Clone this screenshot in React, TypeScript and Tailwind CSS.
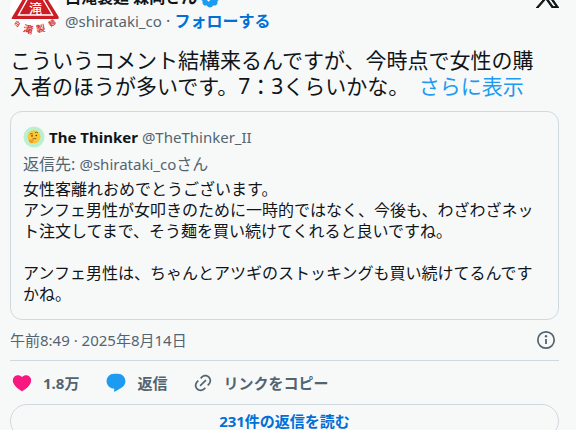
import type { ReactNode } from 'react'

const paths = {
  x: 'M14.258 10.152L23.176 0h-2.113l-7.747 8.813L7.133 0H0l9.352 13.328L0 23.973h2.113l8.176-9.309 6.531 9.309h7.133zm-2.895 3.293l-.949-1.328L2.875 1.56h3.246l6.086 8.523.945 1.328 7.91 11.078h-3.246z',
  verified:
    'M22.25 12c0-1.43-.88-2.67-2.19-3.34.46-1.39.2-2.9-.81-3.91s-2.52-1.27-3.91-.81c-.66-1.31-1.91-2.19-3.34-2.19s-2.67.88-3.33 2.19c-1.4-.46-2.91-.2-3.92.81s-1.26 2.52-.8 3.91c-1.31.67-2.2 1.91-2.2 3.34s.89 2.67 2.2 3.34c-.46 1.39-.21 2.9.8 3.91s2.52 1.26 3.91.81c.67 1.31 1.91 2.19 3.34 2.19s2.68-.88 3.34-2.19c1.39.45 2.9.2 3.91-.81s1.27-2.52.81-3.91c1.31-.67 2.19-1.91 2.19-3.34zm-11.71 4.2L6.8 12.46l1.41-1.42 2.26 2.26 4.8-5.23 1.47 1.36-6.2 6.77z',
  heart:
    'M20.884 13.19c-1.351 2.48-4.001 5.12-8.379 7.67l-.503.3-.504-.3c-4.379-2.55-7.029-5.19-8.382-7.67-1.36-2.5-1.41-4.86-.514-6.67.887-1.79 2.647-2.91 4.601-3.01 1.651-.09 3.368.56 4.798 2.01 1.429-1.45 3.146-2.1 4.796-2.01 1.954.1 3.714 1.22 4.601 3.01.896 1.81.846 4.17-.514 6.67z',
  reply:
    'M1.751 10c0-4.42 3.584-8 8.005-8h4.366c4.49 0 8.129 3.64 8.129 8.13 0 2.96-1.607 5.68-4.196 7.11l-8.054 4.46v-3.69h-.067c-4.49.1-8.183-3.51-8.183-8.01z',
  link: 'M18.36 5.64c-1.95-1.96-5.11-1.96-7.07 0L9.88 7.05 8.46 5.64l1.42-1.42c2.73-2.73 7.16-2.73 9.9 0 2.73 2.74 2.73 7.17 0 9.9l-1.42 1.42-1.41-1.42 1.41-1.41c1.96-1.96 1.96-5.12 0-7.07zm-2.12 3.53l-7.07 7.07-1.41-1.41 7.07-7.07 1.41 1.41zm-12.02.71l1.42-1.42 1.41 1.42-1.41 1.41c-1.96 1.96-1.96 5.12 0 7.07 1.95 1.96 5.11 1.96 7.07 0l1.41-1.41 1.42 1.41-1.42 1.42c-2.73 2.73-7.16 2.73-9.9 0-2.73-2.74-2.73-7.17 0-9.9z',
}

function Icon({ name, className }: { name: keyof typeof paths; className: string }) {
  return (
    <svg viewBox="0 0 24 24" fill="currentColor" aria-hidden="true" className={`shrink-0 ${className}`}>
      <path d={paths[name]} />
    </svg>
  )
}

function ShopAvatar() {
  return (
    <svg viewBox="0 0 50 50" aria-hidden="true" className="size-[50px] shrink-0">
      <defs>
        <clipPath id="avatar">
          <circle cx="25" cy="25" r="25" />
        </clipPath>
      </defs>
      <g clipPath="url(#avatar)">
        <rect width="50" height="50" fill="#fff" />
        <path d="M25-6 50 34H1z" fill="#cb1d24" />
        <path d="M25 .5 42.500 30H8.500z" fill="none" stroke="#fff" strokeWidth="1.400" />
        <text x="25.500" y="27.500" textAnchor="middle" fontSize="13" fontWeight="500" fill="#fff">滝</text>
        <g fill="#d23a40" fontWeight="700">
          <text x="4" y="41" fontSize="6" transform="rotate(35 7 39)">白</text>
          <text x="13" y="48" fontSize="10" transform="rotate(14 18 44)">滝</text>
          <text x="26" y="47" fontSize="9" transform="rotate(-12 30 43)">製</text>
          <text x="39" y="41" fontSize="7" transform="rotate(-35 42 39)">麺</text>
        </g>
      </g>
    </svg>
  )
}

function ThinkerAvatar() {
  return (
    <svg viewBox="0 0 22 22" aria-hidden="true" className="size-[22px] shrink-0">
      <circle cx="11" cy="11" r="10.500" fill="#b9f0d0" />
      <circle cx="11" cy="10.800" r="6.500" fill="#fbc638" />
      <path d="M7 8.200q1.300-1 2.700-.3M12 6.800q1.600-1.200 3 .1" fill="none" stroke="#7c4a16" strokeWidth=".8" />
      <circle cx="9" cy="9.900" r=".8" fill="#5b3410" />
      <circle cx="13.300" cy="9.500" r=".8" fill="#5b3410" />
      <path d="M9.500 13q2-1 3.800-.3" fill="none" stroke="#7c4a16" strokeWidth=".8" />
      <path d="M5.800 13.800q1-1.200 1.800.2l3.600-.9q.9.500-.2 1.200l-.8.400q.5 2.600-2 2.500-2.200-.3-2.400-3.400z" fill="#ee9b22" />
    </svg>
  )
}

function Action({ icon, children }: { icon: ReactNode; children: ReactNode }) {
  return (
    <button type="button" className="flex items-center gap-[10px] text-[15px] leading-5 font-bold text-[#536471]">
      {icon}
      {children}
    </button>
  )
}

export default function App() {
  return (
    <div
      lang="ja"
      className="h-screen overflow-hidden bg-[#f7f9f9] pr-[17px] pl-[10px] font-['Noto_Sans','Noto_Sans_CJK_JP',sans-serif] text-[#0f1419]"
    >
      <article>
        <header className="-mt-[15px] flex items-start">
          <ShopAvatar />
          <div className="ml-[5px] min-w-0 flex-1 text-base leading-6">
            <div className="flex h-6 items-end gap-[2px]">
              <a href="#profile" className="font-bold">白滝製麺 森岡さん</a>
              <Icon name="verified" className="size-[22px] text-[#1d9bf0]" />
            </div>
            <div className="text-[#536471]">
              <a href="#profile" className="text-[15px]">@shirataki_co</a>
              <span> · </span>
              <a href="#follow" className="font-bold text-[#006fd6]">フォローする</a>
            </div>
          </div>
          <a href="#post" aria-label="X">
            <Icon name="x" className="size-[23px] stroke-current stroke-1" />
          </a>
        </header>

        <p className="mt-3 text-[21px] leading-[26px]">
          こういうコメント結構来るんですが、今時点で女性の購
          <br />
          入者のほうが多いです。7：3くらいかな。{' '}
          <a href="#more" className="ml-1 text-[#1d9bf0]">さらに表示</a>
        </p>

        <section className="mt-3 rounded-xl border border-[#cfd9de] px-3 pt-[13px] pb-[14px] text-base">
          <div className="flex items-center text-[15px] leading-6">
            <ThinkerAvatar />
            <span className="ml-1 font-bold">The Thinker</span>
            <span className="ml-1 text-[#536471]">@TheThinker_II</span>
          </div>
          <div className="mt-[3px] leading-6 text-[#536471]">
            返信先: <a href="#profile" className="text-[15px]">@shirataki_co</a>さん
          </div>
          <p className="mt-[3px] leading-[21px]">
            女性客離れおめでとうございます。
            <br />
            アンフェ男性が女叩きのために一時的ではなく、今後も、わざわざネット注文してまで、そう麺を買い続けてくれると良いですね。
            <br />
            <br />
            アンフェ男性は、ちゃんとアツギのストッキングも買い続けてるんですかね。
          </p>
        </section>

        <div className="flex h-[41px] items-center justify-between border-b border-[#cfd9de] text-[15px] text-[#536471]">
          <a href="#post">午前8:49 · 2025年8月14日</a>
          <button type="button" aria-label="情報" className="mr-[3px]">
            <svg viewBox="0 0 20 20" className="size-5" aria-hidden="true">
              <circle cx="10" cy="10" r="8.200" fill="none" stroke="currentColor" strokeWidth="1.700" />
              <circle cx="10" cy="6.300" r="1.200" fill="currentColor" />
              <path d="M9.100 9h1.800v5H9.100z" fill="currentColor" />
            </svg>
          </button>
        </div>

        <div className="flex h-[43px] items-center gap-[26px] pl-[1px]">
          <Action icon={<Icon name="heart" className="size-[22px] text-[#f91880]" />}>1.8万</Action>
          <Action icon={<Icon name="reply" className="size-[22px] text-[#1d9bf0]" />}>返信</Action>
          <Action icon={<Icon name="link" className="size-5" />}>リンクをコピー</Action>
        </div>

        <a
          href="#replies"
          className="flex h-[34px] items-center justify-center rounded-full border border-[#cfd9de] text-[15px] font-bold text-[#006fd6]"
        >
          231件の返信を読む
        </a>
      </article>
    </div>
  )
}
